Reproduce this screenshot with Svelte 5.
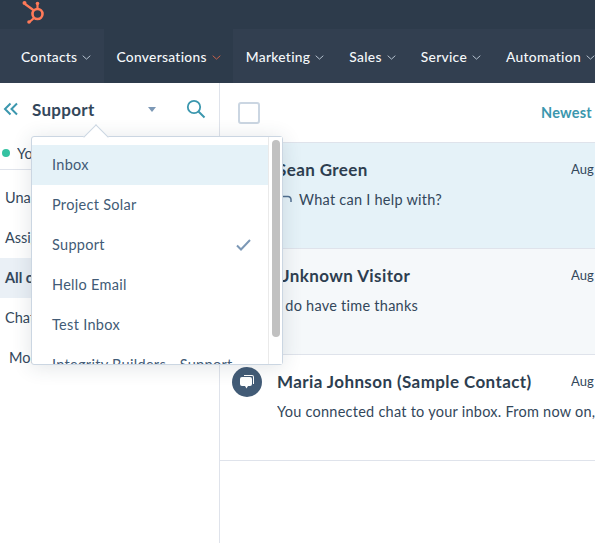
<script>
	const navItems = ['Contacts', 'Conversations', 'Marketing', 'Sales', 'Service', 'Automation'];
	const views = ['Unassigned', 'Assigned to me', 'All open', 'Chatflows'];
	const inboxes = ['Inbox', 'Project Solar', 'Support', 'Hello Email', 'Test Inbox', 'Integrity Builders - Support'];
	const threads = [
		{ name: 'Sean Green', text: 'What can I help with?', cls: 'selected', reply: true },
		{ name: 'Unknown Visitor', text: 'I do have time thanks', cls: 'read' },
		{ name: 'Maria Johnson (Sample Contact)', text: 'You connected chat to your inbox. From now on, any chats', cls: '', chat: true }
	];
</script>

<div class="page">
	<div class="topbar">
		<svg class="logo" width="26" height="25" viewBox="0 0 26 25" fill="none">
			<circle cx="15.5" cy="14" r="5" stroke="#ff7a59" stroke-width="2.6" />
			<path d="M15.5 9V4.5M12 10.5 3 4M12 18l-4.500 4" stroke="#ff7a59" stroke-width="2.2" />
			<circle cx="15.500" cy="3.500" r="1.800" fill="#ff7a59" />
			<circle cx="2.500" cy="3" r="2" fill="#ff7a59" />
			<circle cx="7" cy="22" r="1.800" fill="#ff7a59" />
		</svg>
	</div>
	<nav class="nav">
		{#each navItems as item}
			<div class="nav-item" class:active={item === 'Conversations'}>
				<span>{item}</span>
				<svg width="9" height="5" viewBox="0 0 9 5" fill="none"><path d="M.7.7l3.800 3.400L8.300.7" stroke="currentColor" stroke-width="1" /></svg>
			</div>
		{/each}
	</nav>

	<div class="body">
		<aside class="sidebar">
			<div class="side-head">
				<svg width="16" height="14" viewBox="0 0 16 14" fill="none"><path d="M7.500 1.500 2 7l5.500 5.500M14 1.500 8.500 7l5.500 5.500" stroke="#3b97ae" stroke-width="2" /></svg>
				<strong>Support</strong>
				<span class="caret"></span>
				<svg class="search" width="20" height="20" viewBox="0 0 20 20" fill="none"><circle cx="8" cy="8" r="6.200" stroke="#3b97ae" stroke-width="1.800" /><path d="m12.500 12.500 6 6" stroke="#3b97ae" stroke-width="2" /></svg>
			</div>
			<div class="status">
				<span class="dot"></span>
				<span class="status-text">You're available</span>
				<span class="toggle"><i></i><i></i></span>
			</div>
			<ul class="views">
				{#each views as view}
					<li class:current={view === 'All open'}>{view}</li>
				{/each}
			</ul>
			<div class="more">More</div>
		</aside>

		<main class="main">
			<div class="main-head">
				<span class="checkbox"></span>
				<span class="sort">Newest</span>
			</div>
			{#each threads as t}
				<div class="thread {t.cls}">
					{#if t.chat}
						<span class="avatar">
							<svg width="18" height="18" viewBox="0 0 18 18"><path d="M6 2h8a2 2 0 0 1 2 2v7h-1V4a1 1 0 0 0-1-1H6z" fill="#fff" /><path d="M4 4h8a2 2 0 0 1 2 2v5a2 2 0 0 1-2 2h-2l-1.500 2.500L7 13H4a2 2 0 0 1-2-2V6a2 2 0 0 1 2-2z" fill="#fff" /></svg>
						</span>
					{/if}
					<div class="thread-top">
						<span class="name">{t.name}</span>
						<span class="date">Aug 11</span>
					</div>
					<div class="preview">
						{#if t.reply}
							<svg width="15" height="8" viewBox="0 0 15 8" fill="none"><path d="M0 1.500h11a3 3 0 0 1 3 3V7" stroke="#516f90" stroke-width="1.500" /></svg>
						{/if}
						<span>{t.text}</span>
					</div>
				</div>
			{/each}
		</main>
	</div>

	<div class="popover">
		<span class="arrow"></span>
		<div class="list">
			{#each inboxes as box}
				<div class="option" class:hover={box === 'Inbox'}>
					<span>{box}</span>
					{#if box === 'Support'}
						<svg width="15" height="12" viewBox="0 0 15 12" fill="none"><path d="m1 6.500 4 4L14 1" stroke="#7c98b6" stroke-width="2" /></svg>
					{/if}
				</div>
			{/each}
		</div>
		<div class="track"><span class="thumb"></span></div>
	</div>
</div>

<style>
	:global(body) {
		margin: 0;
		background: #fff;
		overflow: hidden;
	}

	.page {
		position: relative;
		width: 595px;
		height: 543px;
		overflow: hidden;
		font-family: Lato, 'Open Sans', sans-serif;
		color: #33475b;
		font-size: 14.500px;
	}

	.topbar {
		height: 29px;
		background: #2d3b4b;
		display: flex;
		align-items: flex-start;
		padding-left: 22px;
	}

	.nav {
		height: 54px;
		display: flex;
		padding-left: 8.500px;
		background: #323f50;
		white-space: nowrap;
	}

	.nav-item {
		display: flex;
		align-items: center;
		gap: 5px;
		padding: 0 12.500px;
		color: #f5f8fa;
		font-size: 13.800px;
		font-weight: 500;
		letter-spacing: 0.3px;
		flex-shrink: 0;
	}

	.nav-item svg {
		color: #b6c2cf;
		margin-top: 2px;
	}

	.nav-item.active {
		background: #2d3b4b;
	}

	.nav-item.active svg {
		color: #c9624a;
	}

	.body {
		display: flex;
		height: 460px;
	}

	.sidebar {
		width: 219px;
		flex-shrink: 0;
		border-right: 1px solid #dfe3eb;
	}

	.side-head {
		height: 54px;
		display: flex;
		align-items: center;
		padding: 0 13px 2px 3px;
		box-sizing: border-box;
	}

	.side-head strong {
		font-size: 17px;
		font-weight: 700;
		margin-left: 13px;
		letter-spacing: 0.3px;
	}

	.caret {
		width: 0;
		height: 0;
		border: 4px solid transparent;
		border-top: 5px solid #7c98b6;
		margin: 5px 0 0 auto;
	}

	.search {
		margin-left: 30px;
	}

	.status {
		height: 32px;
		display: flex;
		align-items: center;
		padding-left: 2px;
		border-bottom: 1px solid #dfe3eb;
	}

	.dot {
		width: 8px;
		height: 8px;
		border-radius: 50%;
		background: #35c2a2;
		margin-right: 7px;
	}

	.status-text {
		width: 134px;
		white-space: nowrap;
		overflow: hidden;
	}

	.toggle {
		display: flex;
		width: 53px;
		height: 14px;
		margin-top: -16px;
	}

	.toggle i {
		flex: 1;
		background: #3b97ae;
		border-radius: 3px 0 0 3px;
	}

	.toggle i + i {
		background: #fff;
		border: 1px solid #3b97ae;
		border-radius: 0 3px 3px 0;
	}

	.views {
		list-style: none;
		margin: 8px 0 0;
		padding: 0;
	}

	.views li {
		height: 40px;
		line-height: 39px;
		padding-left: 5px;
		white-space: nowrap;
	}

	.views li.current {
		background: #eaf0f6;
		font-weight: 700;
	}

	.more {
		padding: 10px 0 0 9px;
		line-height: 20px;
	}

	.main {
		flex: 1;
		min-width: 0;
	}

	.main-head {
		height: 59px;
		display: flex;
		align-items: center;
		justify-content: space-between;
		padding: 0 0 0 18px;
		box-sizing: border-box;
	}

	.checkbox {
		width: 18px;
		height: 18px;
		border: 2px solid #cbd6e2;
		border-radius: 3px;
	}

	.sort {
		color: #3b97ae;
		font-weight: 700;
		font-size: 14.500px;
		letter-spacing: 0.2px;
		width: 54px;
		white-space: nowrap;
	}

	.thread {
		position: relative;
		height: 106px;
		box-sizing: border-box;
		padding: 16px 0 0 57px;
		border-bottom: 1px solid #dfe3eb;
		white-space: nowrap;
	}

	.thread.selected {
		height: 107px;
		background: #e5f2f8;
		border-top: 1px solid #dfe3eb;
	}

	.thread.read {
		background: #f5f8fa;
	}

	.thread-top {
		display: flex;
		justify-content: space-between;
		align-items: center;
		height: 20px;
	}

	.name {
		font-size: 17px;
		font-weight: 700;
		letter-spacing: 0.4px;
		color: #2d3e50;
	}

	.date {
		width: 24px;
		overflow: hidden;
		font-size: 13px;
	}

	.preview {
		display: flex;
		align-items: center;
		gap: 7px;
		margin-top: 10px;
		height: 20px;
		font-size: 14.500px;
		letter-spacing: 0.25px;
		overflow: hidden;
	}

	.avatar {
		position: absolute;
		left: 12px;
		top: 12px;
		width: 30px;
		height: 30px;
		border-radius: 50%;
		background: #425b76;
		display: flex;
		align-items: center;
		justify-content: center;
	}

	.popover {
		position: absolute;
		left: 31px;
		top: 136px;
		width: 250px;
		height: 227px;
		background: #fff;
		border: 1px solid #cbd6e2;
		border-radius: 3px;
		box-shadow: 0 2px 20px rgba(45, 62, 80, 0.14);
		display: flex;
	}

	.arrow {
		position: absolute;
		left: 54.500px;
		top: -9.500px;
		width: 17px;
		height: 17px;
		background: #fff;
		border-left: 1px solid #cbd6e2;
		border-top: 1px solid #cbd6e2;
		transform: rotate(45deg);
	}

	.list {
		position: relative;
		flex: 1;
		padding-top: 8px;
		overflow: hidden;
		white-space: nowrap;
	}

	.option {
		height: 40px;
		display: flex;
		align-items: center;
		justify-content: space-between;
		padding: 0 17px 2px 20px;
		box-sizing: border-box;
		font-size: 14.500px;
		color: #425b76;
		letter-spacing: 0.3px;
	}

	.option svg {
		margin-top: 2px;
	}

	.option.hover {
		background: #e5f2f8;
	}

	.track {
		position: relative;
		background: #fff;
		width: 14px;
		border-left: 1px solid #eaeaea;
		padding-top: 3px;
		box-sizing: border-box;
	}

	.thumb {
		display: block;
		width: 8px;
		height: 197px;
		margin-left: 3px;
		background: #c1c1c1;
		border-radius: 4px;
	}
</style>
